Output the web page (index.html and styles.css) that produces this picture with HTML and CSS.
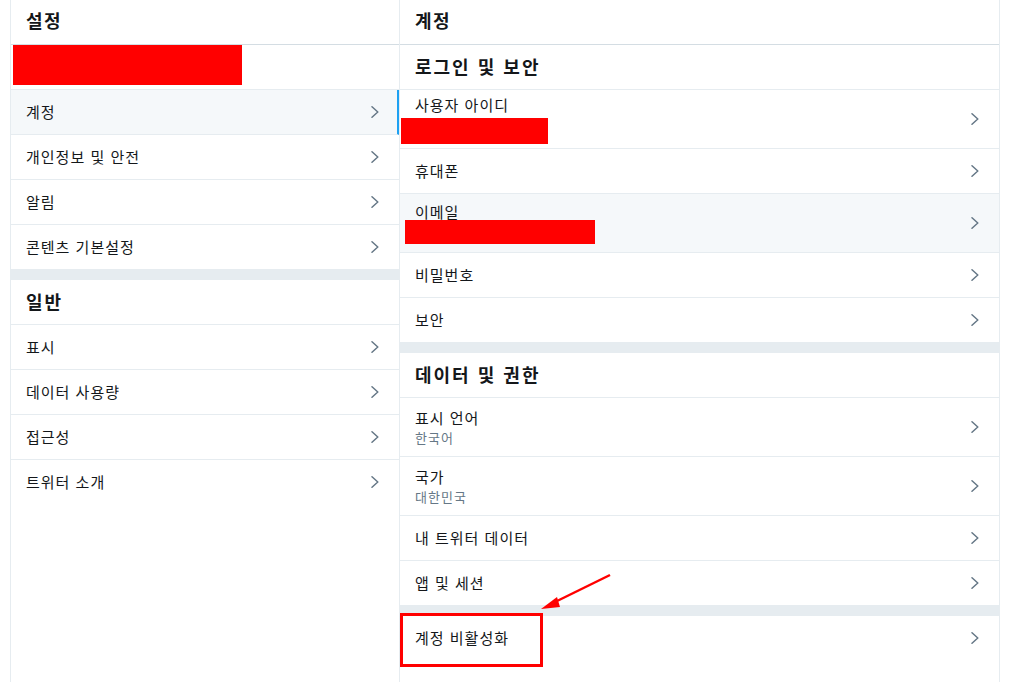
FILE: index.html
```html
<!DOCTYPE html>
<html lang="ko">
<head>
<meta charset="utf-8">
<title>설정</title>
<link rel="stylesheet" href="styles.css">
</head>
<body>
<div class="page">
  <section class="col col-left">
    <header class="col-header">설정</header>
    <div class="row row-redacted"><div class="redact redact-left"></div></div>
    <a class="row active"><span>계정</span><svg class="chev" viewBox="0 0 8 12"><path d="M1 0.8 L6.8 6 L1 11.2"/></svg></a>
    <a class="row"><span>개인정보 및 안전</span><svg class="chev" viewBox="0 0 8 12"><path d="M1 0.8 L6.8 6 L1 11.2"/></svg></a>
    <a class="row"><span>알림</span><svg class="chev" viewBox="0 0 8 12"><path d="M1 0.8 L6.8 6 L1 11.2"/></svg></a>
    <a class="row"><span>콘텐츠 기본설정</span><svg class="chev" viewBox="0 0 8 12"><path d="M1 0.8 L6.8 6 L1 11.2"/></svg></a>
    <div class="gap"></div>
    <h2 class="section-header">일반</h2>
    <a class="row"><span>표시</span><svg class="chev" viewBox="0 0 8 12"><path d="M1 0.8 L6.8 6 L1 11.2"/></svg></a>
    <a class="row"><span>데이터 사용량</span><svg class="chev" viewBox="0 0 8 12"><path d="M1 0.8 L6.8 6 L1 11.2"/></svg></a>
    <a class="row"><span>접근성</span><svg class="chev" viewBox="0 0 8 12"><path d="M1 0.8 L6.8 6 L1 11.2"/></svg></a>
    <a class="row last"><span>트위터 소개</span><svg class="chev" viewBox="0 0 8 12"><path d="M1 0.8 L6.8 6 L1 11.2"/></svg></a>
  </section>

  <section class="col col-right">
    <header class="col-header">계정</header>
    <h2 class="section-header">로그인 및 보안</h2>
    <a class="row tall">
      <div class="text"><span class="title">사용자 아이디</span><div class="redact redact-id"></div></div>
      <svg class="chev" viewBox="0 0 8 12"><path d="M1 0.8 L6.8 6 L1 11.2"/></svg>
    </a>
    <a class="row"><span>휴대폰</span><svg class="chev" viewBox="0 0 8 12"><path d="M1 0.8 L6.8 6 L1 11.2"/></svg></a>
    <a class="row tall hover">
      <div class="text"><span class="title">이메일</span><div class="redact redact-mail"></div></div>
      <svg class="chev" viewBox="0 0 8 12"><path d="M1 0.8 L6.8 6 L1 11.2"/></svg>
    </a>
    <a class="row"><span>비밀번호</span><svg class="chev" viewBox="0 0 8 12"><path d="M1 0.8 L6.8 6 L1 11.2"/></svg></a>
    <a class="row"><span>보안</span><svg class="chev" viewBox="0 0 8 12"><path d="M1 0.8 L6.8 6 L1 11.2"/></svg></a>
    <div class="gap"></div>
    <h2 class="section-header">데이터 및 권한</h2>
    <a class="row tall">
      <div class="text"><span class="title">표시 언어</span><span class="sub">한국어</span></div>
      <svg class="chev" viewBox="0 0 8 12"><path d="M1 0.8 L6.8 6 L1 11.2"/></svg>
    </a>
    <a class="row tall">
      <div class="text"><span class="title">국가</span><span class="sub">대한민국</span></div>
      <svg class="chev" viewBox="0 0 8 12"><path d="M1 0.8 L6.8 6 L1 11.2"/></svg>
    </a>
    <a class="row"><span>내 트위터 데이터</span><svg class="chev" viewBox="0 0 8 12"><path d="M1 0.8 L6.8 6 L1 11.2"/></svg></a>
    <a class="row"><span>앱 및 세션</span><svg class="chev" viewBox="0 0 8 12"><path d="M1 0.8 L6.8 6 L1 11.2"/></svg></a>
    <div class="gap"></div>
    <a class="row last"><span>계정 비활성화</span><svg class="chev" viewBox="0 0 8 12"><path d="M1 0.8 L6.8 6 L1 11.2"/></svg></a>
  </section>

  <div class="highlight-box"></div>
  <svg class="arrow" viewBox="0 0 80 45" width="80" height="45">
    <line x1="70" y1="3" x2="13" y2="31" />
    <polygon points="1,37 17,25 20,35" />
  </svg>
</div>
</body>
</html>
```

FILE: styles.css
```css
* { box-sizing: border-box; }

html, body {
  margin: 0;
  padding: 0;
  background: #ffffff;
}

body {
  font-family: "Noto Sans CJK KR", "Noto Sans", "Liberation Sans", sans-serif;
  color: #14171a;
  font-size: 15px;
}

.page {
  position: relative;
  display: flex;
  align-items: stretch;
  padding-left: 10px;
  min-height: 682px;
  height: 682px;
  overflow: hidden;
}

.col {
  display: flex;
  flex-direction: column;
  border-left: 1px solid #e6ecf0;
}

.col-left {
  width: 389px;
}

.col-right {
  width: 601px;
  border-right: 1px solid #e6ecf0;
}

.col-header {
  height: 45px;
  flex: 0 0 45px;
  border-bottom: 1px solid #d4dde3;
  display: flex;
  align-items: center;
  padding-left: 15px;
  padding-bottom: 5px;
  font-size: 18px;
  font-weight: 700;
  letter-spacing: 1.5px;
}

.col-left .col-header,
.col-left .row,
.col-left .section-header {
  padding-left: 15px;
}

.section-header {
  margin: 0;
  height: 45px;
  flex: 0 0 45px;
  border-bottom: 1px solid #e6ecf0;
  display: flex;
  align-items: center;
  padding-left: 15px;
  padding-bottom: 2px;
  font-size: 18px;
  font-weight: 700;
  letter-spacing: 2px;
}

.row {
  height: 45px;
  flex: 0 0 45px;
  border-bottom: 1px solid #e6ecf0;
  display: flex;
  align-items: center;
  justify-content: space-between;
  padding: 0 20px 0 15px;
  font-size: 15px;
  line-height: 20px;
  letter-spacing: 1px;
  color: #14171a;
  text-decoration: none;
}

.row.last {
  border-bottom: none;
  padding-bottom: 1px;
}

.row.tall {
  height: 59px;
  flex: 0 0 59px;
}

.row.active {
  background: #f5f8fa;
  border-right: 2px solid #1da1f2;
  padding-right: 18px;
}

.row.hover {
  background: #f5f8fa;
}

.row-redacted {
  padding-left: 2px !important;
  padding-bottom: 0;
  align-items: flex-start;
}

.text {
  display: flex;
  flex-direction: column;
}

.title {
  line-height: 20px;
}

.sub {
  font-size: 13px;
  line-height: 19px;
  letter-spacing: 1px;
  color: #657786;
}

.redact {
  background: #ff0000;
}

.redact-left {
  width: 229px;
  height: 40px;
}

.redact-id {
  width: 147px;
  height: 26px;
  margin-left: -14px;
  margin-top: 3px;
}

.redact-mail {
  width: 190px;
  height: 24px;
  margin-left: -10px;
  margin-top: -2px;
}

.chev {
  width: 8px;
  height: 12px;
  flex: 0 0 8px;
  fill: none;
  stroke: #657786;
  stroke-width: 1.5;
  stroke-linecap: round;
  stroke-linejoin: round;
}

.gap {
  height: 10px;
  flex: 0 0 10px;
  background: #e6ecf0;
}

.highlight-box {
  position: absolute;
  left: 400px;
  top: 613px;
  width: 143px;
  height: 54px;
  border: 3px solid #ff0000;
}

.arrow {
  position: absolute;
  left: 540px;
  top: 572px;
}

.arrow line {
  stroke: #ff0000;
  stroke-width: 2.5;
}

.arrow polygon {
  fill: #ff0000;
}
```
